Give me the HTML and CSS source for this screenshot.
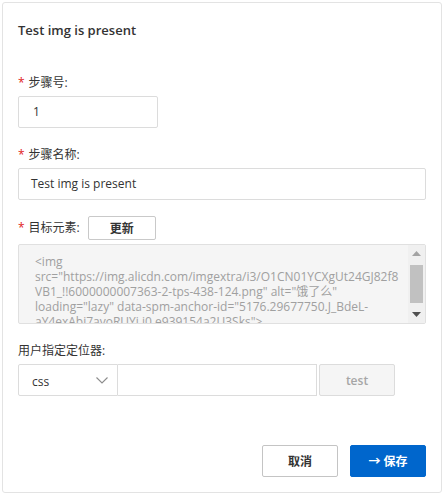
FILE: index.html
```html
<!DOCTYPE html>
<html lang="zh-CN">
<head>
<meta charset="utf-8">
<link rel="stylesheet" href="styles.css">
</head>
<body>
<div class="card">
  <div class="title">Test img is present</div>

  <div class="item item-first">
    <div class="label"><span class="req">*</span>步骤号:</div>
    <div class="input input-short">1</div>
  </div>

  <div class="item">
    <div class="label"><span class="req">*</span>步骤名称:</div>
    <div class="input">Test img is present</div>
  </div>

  <div class="item item-target">
    <div class="label-row">
      <div class="label"><span class="req">*</span>目标元素:</div>
      <button class="btn btn-small">更新</button>
    </div>
    <div class="textarea">
      <div class="ta-text">
        <span class="ta-line">&lt;img</span>
        <span class="ta-line">src="https://img.alicdn.com/imgextra/i3/O1CN01YCXgUt24GJ82f8</span>
        <span class="ta-line">VB1_!!6000000007363-2-tps-438-124.png" alt="饿了么"</span>
        <span class="ta-line">loading="lazy" data-spm-anchor-id="5176.29677750.J_BdeL-</span>
        <span class="ta-line">aY4exAbj7avoRUYi.i0.e939154a2U3Sks"&gt;</span>
      </div>
      <div class="scrollbar">
        <svg class="arrow" width="9" height="5" viewBox="0 0 9 5"><path d="M0 5 L4.5 0 L9 5 Z" fill="#a3a3a3"/></svg>
        <div class="thumb"></div>
        <svg class="arrow" width="9" height="5" viewBox="0 0 9 5"><path d="M0 0 L4.5 5 L9 0 Z" fill="#505050"/></svg>
      </div>
    </div>
  </div>

  <div class="item item-locator">
    <div class="label">用户指定定位器:</div>
    <div class="locator-row">
      <div class="select">
        <span>css</span>
        <svg width="12" height="7" viewBox="0 0 12 7"><path d="M0.5 0.5 L6 6 L11.5 0.5" fill="none" stroke="#8c8c8c" stroke-width="1.1"/></svg>
      </div>
      <div class="input input-locator"></div>
      <button class="btn btn-test">test</button>
    </div>
  </div>

  <div class="footer">
    <button class="btn btn-cancel">取消</button>
    <button class="btn btn-primary">→ 保存</button>
  </div>
</div>
</body>
</html>
```

FILE: styles.css
```css
* { box-sizing: border-box; }
html, body { margin: 0; padding: 0; background: #ffffff; }
body {
  font-family: "Open Sans", "Noto Sans CJK SC", sans-serif;
  font-size: 12px;
  color: #333333;
}
.card {
  margin: 2px 0 0 2px;
  width: 440px;
  height: 491px;
  border: 1px solid #e3e3e3;
  border-radius: 3px;
  padding: 17px 15px 0 15px;
  display: flex;
  flex-direction: column;
}
.title {
  height: 20px;
  line-height: 20px;
  font-size: 13px;
  font-weight: 600;
  color: #333333;
}
.item { margin-top: 18px; }
.item-first { margin-top: 34px; }
.label {
  height: 18px;
  line-height: 18px;
  margin-bottom: 4px;
  color: #333333;
}
.req { color: #e02020; margin-right: 4px; }
.input {
  height: 32px;
  line-height: 30px;
  border: 1px solid #dcdcdc;
  border-radius: 2px;
  padding: 0 12px;
  background: #ffffff;
}
.input-short { width: 140px; padding-left: 14px; }
.item-target { margin-top: 16px; }
.label-row {
  display: flex;
  align-items: center;
  height: 24px;
  gap: 8px;
  margin-bottom: 4px;
}
.label-row .label { margin-bottom: 0; }
.btn {
  font-family: inherit;
  font-size: 12px;
  border: 1px solid #c9c9c9;
  border-radius: 2px;
  background: #ffffff;
  color: #333333;
  padding: 0;
  cursor: pointer;
}
.btn-small {
  width: 68px;
  height: 24px;
  font-weight: 600;
}
.textarea {
  position: relative;
  height: 80px;
  border: 1px solid #e0e0e0;
  border-radius: 2px;
  background: #f5f5f5;
  overflow: hidden;
}
.ta-text {
  padding: 9px 0 0 16px;
  color: #a0a0a0;
  line-height: 15px;
}
.ta-line { display: block; white-space: nowrap; }
.scrollbar {
  position: absolute;
  top: 0;
  right: 0;
  width: 17px;
  height: 78px;
  background: #f0f0f0;
  display: flex;
  flex-direction: column;
  align-items: center;
  justify-content: space-between;
  padding: 6px 0 6px 0;
}
.thumb {
  width: 13px;
  height: 38px;
  background: #c1c1c1;
}
.item-locator { margin-top: 18px; }
.locator-row {
  display: flex;
  height: 32px;
}
.select {
  width: 100px;
  height: 32px;
  border: 1px solid #dcdcdc;
  border-radius: 2px 0 0 2px;
  display: flex;
  align-items: center;
  justify-content: space-between;
  padding: 0 9px 0 13px;
}
.select span { padding-top: 2px; }
.input-locator {
  width: 199px;
  border-left: none;
  border-radius: 0;
}
.btn-test {
  margin-left: 2px;
  width: 76px;
  height: 32px;
  background: #f5f5f5;
  border-color: #dcdcdc;
  color: #a6a6a6;
  font-weight: 600;
}
.footer {
  margin-top: auto;
  margin-bottom: 15px;
  display: flex;
  justify-content: flex-end;
  gap: 12px;
}
.btn-cancel {
  width: 76px;
  height: 32px;
  font-weight: 600;
  border-color: #c4c4c4;
}
.btn-primary {
  width: 76px;
  height: 32px;
  background: #0066cc;
  border-color: #0066cc;
  color: #ffffff;
  font-weight: 600;
}
```
